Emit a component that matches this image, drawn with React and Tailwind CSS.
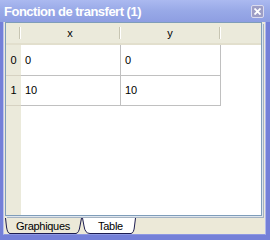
import React from "react";

function HeaderDivider() {
  return (
    <div className="flex h-full items-stretch py-[4px]">
      <div className="w-[1px] bg-[#c7c5b2]" />
      <div className="w-[1px] bg-white" />
    </div>
  );
}

export default function App() {
  return (
    <div className="w-[270px] h-[240px] flex flex-col bg-[#7480d8] font-['Liberation_Sans',sans-serif] text-[11px] text-black overflow-hidden">
      {/* Title bar */}
      <div className="h-[22px] flex items-center justify-between pl-[4px] pr-[6px] bg-gradient-to-b from-[#abb9f0] via-[#98a9e7] to-[#8e9ee2]">
        <span className="text-white font-bold text-[13px] tracking-[-0.5px] leading-none">Fonction de transfert (1)</span>
        <div className="w-[13px] h-[13px] rounded-[2px] bg-[#9d9ec6] border border-[#dadbee] flex items-center justify-center">
          <svg width="7" height="7" viewBox="0 0 7 7">
            <path d="M0.5 0.5 L6.5 6.5 M6.5 0.5 L0.5 6.5" stroke="white" strokeWidth="1.8" />
          </svg>
        </div>
      </div>
      {/* Body */}
      <div className="flex-1 flex flex-col ml-[3px] mr-[4px] mb-[5px] bg-[#ece9d8] border-l border-r border-b border-l-[#b9c0ee] border-r-[#b0b8ec] border-b-[#8e98e2]">
        <div className="flex-1 ml-[1px] mr-[3px] mb-[2px] border border-[#7f9db9] shadow-[1px_1px_0_#dfe6ee,2px_2px_0_#a5b3c2] bg-white flex flex-col">
          {/* header */}
          <div className="h-[22px] flex bg-[#ebeadb] border-b-[2px] border-[#e2dfcd]">
            <div className="w-[15px] flex justify-end">
              <HeaderDivider />
            </div>
            <div className="w-[100px] flex">
              <div className="flex-1 flex items-center justify-center">x</div>
              <HeaderDivider />
            </div>
            <div className="w-[100px] flex">
              <div className="flex-1 flex items-center justify-center">y</div>
              <HeaderDivider />
            </div>
            <div className="flex-1" />
          </div>
          <div className="flex-1 flex">
            <div className="w-[15px] bg-[#ebeadb] flex flex-col">
              <div className="h-[31px] flex items-center justify-center border-b border-[#d6d2c2]">0</div>
              <div className="h-[30px] flex items-center justify-center border-b border-[#d6d2c2]">1</div>
            </div>
            <div className="flex flex-col">
              <div className="h-[31px] flex border-b border-[#c0c0c0]">
                <div className="w-[100px] pl-[4px] flex items-center border-r border-[#c0c0c0]">0</div>
                <div className="w-[100px] pl-[4px] flex items-center border-r border-[#c0c0c0]">0</div>
              </div>
              <div className="h-[30px] flex border-b border-[#c0c0c0]">
                <div className="w-[100px] pl-[4px] flex items-center border-r border-[#c0c0c0]">10</div>
                <div className="w-[100px] pl-[4px] flex items-center border-r border-[#c0c0c0]">10</div>
              </div>
            </div>
          </div>
        </div>
        {/* Tabs */}
        <div className="h-[16px] flex items-stretch pl-[1px]">
          <svg width="5" height="16" viewBox="0 0 5 16" className="block">
            <path d="M0.5 0 L1.5 9 Q2.5 15.5 5 15.5" stroke="#1c1c50" fill="none" strokeWidth="1" />
          </svg>
          <div className="w-[66px] flex items-center justify-center border-b border-[#1c1c50] tracking-[-0.3px] pt-[1px]">Graphiques</div>
          <svg width="14" height="16" viewBox="0 0 14 16" className="block">
            <path d="M6.5 0 L8 8 Q9 15.5 14 15.5 L14 0 Z" fill="white" />
            <path d="M0 15.5 Q3 15 4 8 L5.5 0" stroke="#1c1c50" fill="none" strokeWidth="1" />
            <path d="M6.5 0 L8 8 Q9 15.5 14 15.5" stroke="#1c1c50" fill="none" strokeWidth="1" />
          </svg>
          <div className="w-[41px] bg-white flex items-center justify-center border-b border-[#1c1c50] tracking-[-0.3px] pt-[1px]">Table</div>
          <svg width="6" height="16" viewBox="0 0 6 16" className="block">
            <path d="M0 15.5 Q3 15 3.5 8 L4.5 0 L0 0 Z" fill="white" />
            <path d="M0 15.5 Q3 15 3.5 8 L4.5 0" stroke="#1c1c50" fill="none" strokeWidth="1" />
          </svg>
        </div>
      </div>
    </div>
  );
}
